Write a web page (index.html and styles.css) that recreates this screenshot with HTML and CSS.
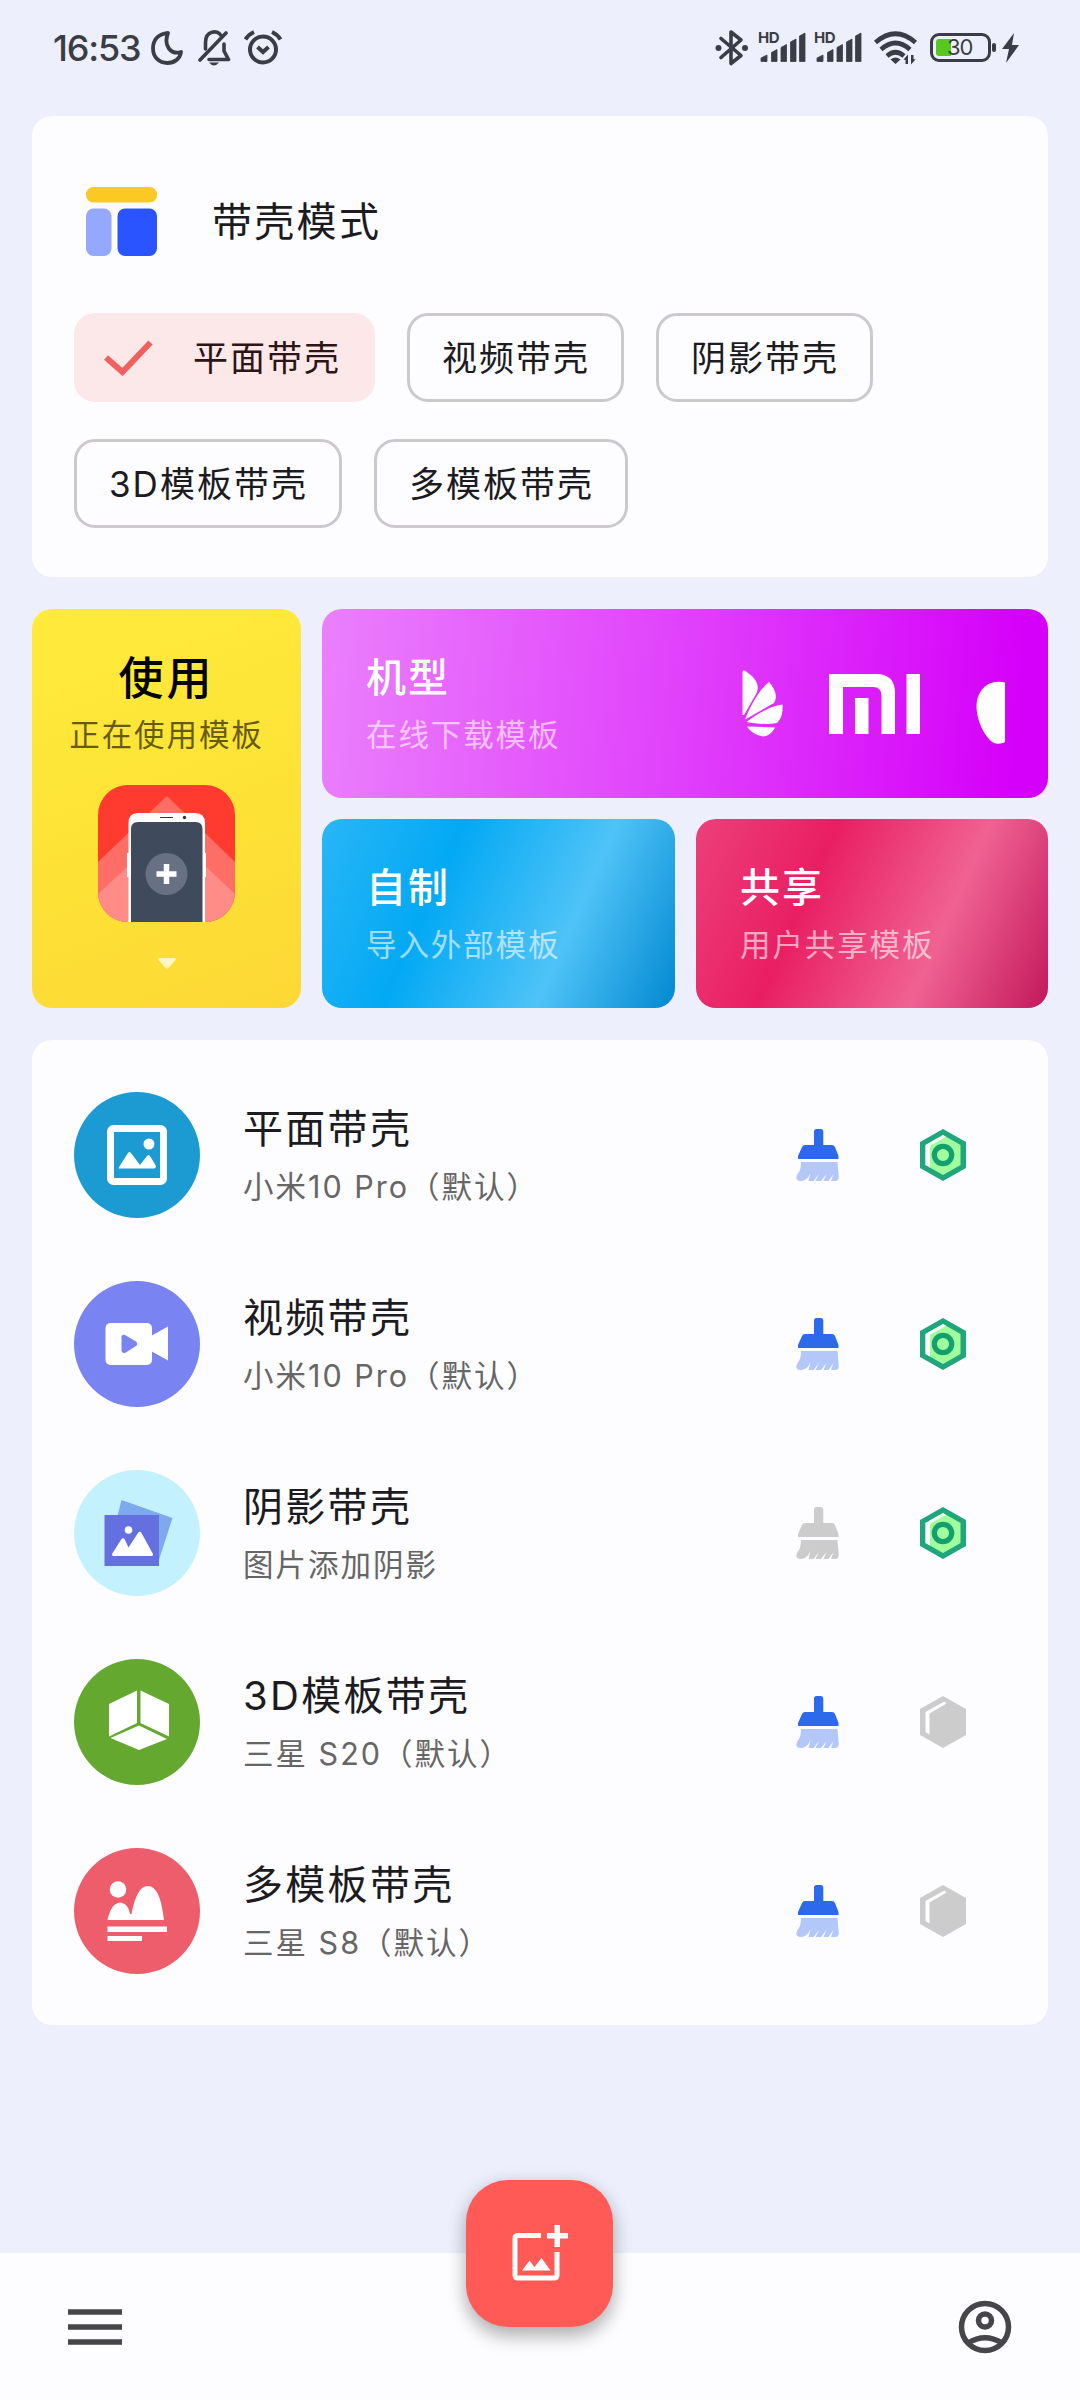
FILE: index.html
```html
<!DOCTYPE html>
<html lang="zh-CN">
<head>
<meta charset="utf-8">
<title>带壳模式</title>
<link rel="stylesheet" href="styles.css">
</head>
<body>
<svg class="defs" width="0" height="0" aria-hidden="true">
  <symbol id="broom" viewBox="0 0 43 52">
    <path class="handle" d="M18 16V2.500Q18 0 20.500 0H25Q27.300 0 27.300 2.500V16H36Q38 16 39 18L42.500 27V30H2V27L6 18Q7 16 9 16Z"/>
    <path class="bristle" d="M5 33H41.500L42.800 48Q42.800 52 39 52H35L37.500 45 32.500 52H27.500L30.500 45 25 52H19.500L23 45 17.500 52H12.500L14.500 44Q11 52 5 52 0 52 .3 48 1 45 3 43 5 40 5 33Z"/>
  </symbol>
  <symbol id="hex-on" viewBox="0 0 46 52">
    <path fill="#1fa67c" d="M23 0 46 13V39L23 52 0 39V13Z"/>
    <path fill="#a0ff9c" d="M23 6 40.500 16V36L23 46 5.500 36V16Z"/>
    <path fill="#fff" d="M23 6 26 7.700 10 16.800V38.500L5.500 36V16Z"/>
    <circle cx="23" cy="26" r="8.700" fill="#a0ff9c" stroke="#14a06e" stroke-width="5.200"/>
  </symbol>
  <symbol id="hex-off" viewBox="0 0 46 52">
    <path fill="#ccc" d="M23 0 46 13V39L23 52 0 39V13Z"/>
    <path fill="#fff" d="M24.500 5.500 26.500 7.500 9.500 17.500V38.500L5.500 36V16Z"/>
  </symbol>
  <symbol id="signal" viewBox="0 0 46 32">
    <path d="M1 26 7 23V29.500H1ZM11.500 20.500 17 17.500V29.500H11.500ZM21 15.500 26.500 12.500V29.500H21ZM30.500 10 36 7V29.500H30.500ZM39.500 4 45 1V29.500H39.500Z" stroke="currentColor" stroke-width=".8" stroke-linejoin="round" fill="currentColor"/>
  </symbol>
</svg>

<header class="status">
  <span class="clock">16:53</span>
  <svg class="moon" width="32" height="34" viewBox="0 0 32 34"><path d="M17 2C6 3 2 10 2 17.500 2 26 8 32 16.500 32 23 32 29 28 30 21 20 24 12 15 17 2Z" fill="none" stroke="currentColor" stroke-width="3.800" stroke-linejoin="round"/></svg>
  <svg class="bell" width="34" height="36" viewBox="0 0 34 36"><g fill="none" stroke="currentColor" stroke-width="3.600" stroke-linecap="round" stroke-linejoin="round"><path d="M2 30 28 3"/><path d="M7.500 19V12.500C7.500 0 20 0 22.500 5M26 14V21L30.500 29.500H11"/></g><path d="M11 32.500H21Q16 38.500 11 32.500Z" fill="currentColor"/></svg>
  <svg class="alarm" width="38" height="36" viewBox="0 0 38 36"><g fill="none" stroke="currentColor" stroke-width="4"><circle cx="19" cy="19.500" r="13"/><path d="M13.500 17 19 22 24.500 17M1.500 9.500Q4.500 4.500 10 2M36.500 9.500Q33.500 4.500 28 2"/></g></svg>
  <span class="spacer"></span>
  <svg class="bt" width="34" height="38" viewBox="0 0 34 38"><path d="M6 9.500 26 26.500 16 34.500V3L26 11 6 28.500" fill="none" stroke="currentColor" stroke-width="3.600" stroke-linejoin="round" stroke-linecap="round"/><circle cx="3.500" cy="19" r="3"/><circle cx="30" cy="19" r="3"/></svg>
  <span class="net"><svg width="46" height="32"><use href="#signal"/></svg><b>HD</b></span>
  <span class="net"><svg width="46" height="32"><use href="#signal"/></svg><b>HD</b></span>
  <svg class="wifi" width="44" height="34" viewBox="0 0 44 34"><g fill="none" stroke="currentColor" stroke-width="4.600"><path d="M1.500 11.500Q21.500-6 41.500 11.500M7 18.500Q21.500 5.500 36 18.500M13 25Q21.500 17.500 30 25"/></g><path d="M16.500 28.500Q21.500 24.500 26.500 28.500L21.500 33Z"/><path d="M29.500 28.500 34 23.500V33H31.500V29ZM41.500 28.500 37 33.500V24H39.500V28Z"/></svg>
  <span class="battery"><i></i><em>30</em></span>
  <svg class="bolt" width="17" height="30" viewBox="0 0 17 30"><path d="M12 0 0 16H7L4 30 17 12H10Z"/></svg>
</header>

<main>
  <section class="card modes">
    <h1><svg width="71" height="69" viewBox="0 0 71 69"><rect width="71" height="15.500" rx="7.500" fill="#fbc924"/><rect y="21.500" width="25.500" height="47.500" rx="7.500" fill="#94a9fd"/><rect x="31.500" y="21.500" width="39.500" height="47.500" rx="7.500" fill="#2954ff"/></svg>带壳模式</h1>
    <div class="chips">
      <button class="chip on"><svg width="49" height="36" viewBox="0 0 49 36"><path d="M2 17.500 18.500 32 46.500 2.500" fill="none" stroke="#f0605f" stroke-width="6"/></svg>平面带壳</button>
      <button class="chip">视频带壳</button>
      <button class="chip">阴影带壳</button>
      <button class="chip">3D模板带壳</button>
      <button class="chip">多模板带壳</button>
    </div>
  </section>

  <section class="tiles">
    <div class="tile use">
      <h2>使用</h2><p>正在使用模板</p>
      <svg class="app" width="137" height="137" viewBox="0 0 137 137"><defs><clipPath id="r"><rect width="137" height="137" rx="30"/></clipPath></defs><g clip-path="url(#r)"><rect width="137" height="137" fill="#ff3b30"/><path d="M69 11 137 77V137H0V77Z" fill="#ff6e66"/><path d="M69 45 137 109V137H0V109Z" fill="#ff8c86"/><path d="M29 68H108V92H29Z" fill="#fff"/><path d="M30.500 137V38Q30.500 28 40 28H97Q107 28 107 38V137Z" fill="#fff"/><path d="M33 137V44Q33 37 40 37H97.500Q104.500 37 104.500 44V137Z" fill="#3f4b5c"/><path d="M62 32.500H75" stroke="#333" stroke-width="1.200"/><circle cx="86.500" cy="32.500" r="1.700" fill="#333"/><circle cx="68.500" cy="89" r="21" fill="#677183"/><path d="M68.500 79V99M58.500 89H78.500" stroke="#fff" stroke-width="5.500"/></g></svg>
      <svg class="arrow" width="20" height="13" viewBox="0 0 20 13"><path d="M2.500 1H17.500Q19.500 1 18.500 3L12 10.500Q10 12.500 8 10.500L1.500 3Q.5 1 2.500 1Z" fill="#fff8c4"/></svg>
    </div>
    <div class="tile phone">
      <div><h3>机型</h3><p>在线下载模板</p></div>
      <svg width="264" height="76" viewBox="0 0 264 76" fill="#fff"><path d="M.5 46V3C1 .5 3.500 1 6 4 15 10 18 18 14 25L2 46ZM3 50.500C8 38 16 22 27 13 33 20 36 27 32 34ZM4.500 53C15 45 28 37 40.500 35.500 41 45 39 50 35 54 25 56 15 54.500 4.500 53ZM5 57.500 33 58.500C30 64 26 67 21 67.500 13 66 8 62 5 57.500Z"/><path d="M87 5H134Q153 5 153 24V65H139.500V27Q139.500 18 131 18H101V65H87ZM113 29H126.500V65H113ZM164.500 5H178V65H164.500Z"/><path d="M263 13.500C245 9 234.500 23 234.500 37 234.500 53 244 70 252 74 256 75.500 260 74.500 263 73Z"/></svg>
    </div>
    <div class="tile self"><h3>自制</h3><p>导入外部模板</p></div>
    <div class="tile share"><h3>共享</h3><p>用户共享模板</p></div>
  </section>

  <ul class="card list">
    <li><span class="disc flat"><svg width="126" height="126" viewBox="0 0 126 126" fill="#fff"><rect x="36.500" y="36.500" width="53" height="53" rx="3" fill="none" stroke="#fff" stroke-width="7"/><circle cx="75" cy="52" r="5.500"/><path d="M45 75 54 61Q55.500 59 57 61L66 73 73 64Q74.500 62 76 64L82 74Q82 76 80 76.500H46Q44 76.500 45 75Z"/></svg></span>
      <div class="label"><h3>平面带壳</h3><p>小米10 Pro（默认）</p></div><svg class="broom"><use href="#broom"/></svg><svg class="hex"><use href="#hex-on"/></svg></li>
    <li><span class="disc video"><svg width="126" height="126" viewBox="0 0 126 126" fill="#fff"><rect x="31.500" y="42" width="46.500" height="42" rx="5"/><path d="M77 55 94 45.500V79.500L77 70Z"/><path d="M47.500 55.500Q48 53 51 54L62 60.500Q64.500 63 62 65L51 72Q48 72.500 47.500 70Z" fill="#7983f2"/></svg></span>
      <div class="label"><h3>视频带壳</h3><p>小米10 Pro（默认）</p></div><svg class="broom"><use href="#broom"/></svg><svg class="hex"><use href="#hex-on"/></svg></li>
    <li><span class="disc shadow"><svg width="126" height="126" viewBox="0 0 126 126" fill="#fff"><path d="M47.500 30 98.500 48 83 96 35 80Z" fill="#7fa9ee"/><rect x="30.500" y="45" width="54.500" height="51" fill="#6470e0"/><circle cx="54.500" cy="60" r="3.800"/><path d="M38 84 47.500 69Q49 67.500 50.500 69L54.500 77.500 64 63Q66 60.500 67.500 63L79 84Q79 86 78 86H39Q38 86 38 84Z"/></svg></span>
      <div class="label"><h3>阴影带壳</h3><p>图片添加阴影</p></div><svg class="broom off"><use href="#broom"/></svg><svg class="hex"><use href="#hex-on"/></svg></li>
    <li><span class="disc cube"><svg width="126" height="126" viewBox="0 0 126 126" fill="#fff"><path d="M63 31.500V64L35 77.500V45ZM66.500 31.500 95 45V77.500L66.500 64ZM65 66.500 93 80 65 91 36.500 79Z"/></svg></span>
      <div class="label"><h3>3D模板带壳</h3><p>三星 S20（默认）</p></div><svg class="broom"><use href="#broom"/></svg><svg class="hex"><use href="#hex-off"/></svg></li>
    <li><span class="disc multi"><svg width="126" height="126" viewBox="0 0 126 126" fill="#fff"><circle cx="44" cy="41.500" r="8.300"/><path d="M33.500 72C36 61 40 55 46 54.500 52 55 55 60 56 66H57.500C61 48 66 38 74 38 84 38 88 55 90 72ZM33.500 78.500H93V84H33.500ZM33.500 88H68V93H33.500Z"/></svg></span>
      <div class="label"><h3>多模板带壳</h3><p>三星 S8（默认）</p></div><svg class="broom"><use href="#broom"/></svg><svg class="hex"><use href="#hex-off"/></svg></li>
  </ul>
</main>

<nav class="bar">
  <svg width="54" height="36" viewBox="0 0 54 36"><path d="M0 3H54M0 18H54M0 33H54" stroke="currentColor" stroke-width="5.500"/></svg>
  <button class="fab" aria-label="add"><svg width="56" height="58" viewBox="0 0 56 58" fill="#fff"><path d="M29 10.500H6Q3 10.500 3 13.500V50Q3 53 6 53H42Q45 53 45 50V27" fill="none" stroke="#fff" stroke-width="5"/><path d="M10 45.500 17.500 35.500 22.500 42 29.500 33 38.500 45.500ZM42.500 0H48V8H56V13.500H48V22H42.500V13.500H35V8H42.500Z"/></svg></button>
  <svg width="54" height="54" viewBox="0 0 54 54"><g fill="none" stroke="currentColor" stroke-width="5.500"><circle cx="27" cy="27" r="23.500"/><circle cx="27" cy="20.500" r="6.500"/><path d="M10 43Q27 32.500 44 43"/></g></svg>
</nav>
</body>
</html>
```
FILE: styles.css
```css
* { box-sizing: border-box; }
body {
  margin: 0;
  width: 1080px;
  height: 2400px;
  display: flex;
  flex-direction: column;
  background: #edf0fc;
  color: #1c1b1f;
  font-family: Inter, "Noto Sans CJK SC", sans-serif;
  overflow: hidden;
}
h1, h2, h3, p, ul { margin: 0; padding: 0; font-weight: 400; }
button { font: inherit; color: inherit; border: 0; }
svg { display: block; flex: none; }
.defs { position: absolute; }

.status { height: 116px; padding: 0 61px 21px 53px; display: flex; align-items: center; color: #3b3d46; }
.status svg { fill: currentColor; }
.clock { font: 500 36px/40px Inter, sans-serif; letter-spacing: -1.2px; width: 97px; white-space: nowrap; }
.moon { margin-left: 1px; }
.bell { margin-left: 15px; }
.alarm { margin-left: 12px; }
.spacer { flex: 1; }
.bt { margin-right: 11px; }
.net { position: relative; width: 46px; margin-right: 10px; }
.net b { position: absolute; left: -2px; top: -2px; font: 700 15px/16px Inter, sans-serif; letter-spacing: -.5px; }
.wifi { margin: 0 12px 0 2px; }
.battery { position: relative; width: 61px; height: 29px; border: 3px solid #3b3d46; border-radius: 9px; }
.battery::after { content: ""; position: absolute; right: -8px; top: 7px; width: 4px; height: 9px; border-radius: 2px; background: #3b3d46; }
.battery i { position: absolute; left: 3px; top: 3px; width: 15px; height: 17px; border-radius: 3px 0 0 3px; background: #59c81e; }
.battery em { position: absolute; left: 14px; top: 0; font: 400 22px/23px Inter, sans-serif; letter-spacing: -1px; }
.bolt { margin-left: 11px; }

main { flex: 1; padding: 0 32px; }
.card { background: #fdfcff; border-radius: 20px; }

.modes { height: 461px; padding: 71px 42px 0; }
.modes h1 { display: flex; align-items: center; gap: 55px; height: 69px; padding-left: 12px; font-size: 40px; line-height: 56px; letter-spacing: 2.3px; }
.chips { display: flex; flex-wrap: wrap; gap: 37px 32px; margin-top: 57px; }
.chip { height: 89px; padding: 0 31px 0 32px; display: flex; align-items: center; border: 3px solid #cbc9ce; border-radius: 21px; background: none; font-size: 35px; line-height: 50px; letter-spacing: 2px; }
.chip.on { background: #fde8e9; border-color: #fde8e9; padding-left: 27px; gap: 40px; color: #2c1417; }

.tiles { display: grid; grid-template: 189px 189px / 269px 353px 352px; gap: 21px; margin: 32px 0; }
.tile { border-radius: 20px; padding: 39px 0 0 44px; color: #fff; font-family: "Noto Sans CJK SC", sans-serif; }
.tile h3 { font-size: 40px; line-height: 54px; font-weight: 500; letter-spacing: 2px; }
.tile p { font-size: 30.5px; line-height: 44px; letter-spacing: 1.9px; margin-top: 9px; opacity: .6; }
.use { grid-row: 1 / 3; padding: 34px 0 0; display: flex; flex-direction: column; align-items: center; color: #000; background: linear-gradient(160deg, #ffeb3b, #fde335 50%, #fdd835); }
.use h2 { font-size: 45px; line-height: 66px; font-weight: 500; letter-spacing: 3px; }
.use p { margin-top: 2px; }
.app { margin-top: 30px; }
.arrow { margin-top: 35px; }
.phone { grid-column: 2 / 4; display: flex; justify-content: space-between; padding-right: 42px; background: linear-gradient(95deg, #ea80fc, #e040fb 50%, #d500f9 95%); }
.phone svg { margin-top: 21px; }
.self { background: linear-gradient(114deg, #29b6f6, #03a9f4 33%, #4fc3f7 68%, #0288d1); }
.share { background: linear-gradient(114deg, #ec407a, #e91e63 33%, #f06292 68%, #c2185b); }

.list { list-style: none; height: 985px; padding: 20px 42px; }
.list li { height: 189px; display: flex; align-items: center; }
.disc { width: 126px; height: 126px; border-radius: 50%; }
.flat { background: #1c9bd3; }
.video { background: #7983f2; }
.shadow { background: #c4f1fe; }
.cube { background: #65a830; }
.multi { background: #ed5d6b; }
.label { flex: 1; margin-left: 43px; }
.label h3 { font-size: 40px; line-height: 56px; letter-spacing: 2.3px; }
.label p { font-size: 30.5px; line-height: 44px; letter-spacing: 2px; margin-top: 8px; color: #666; }
.broom { width: 43px; height: 52px; --h: #2c69eb; --b: #b3c7f9; }
.broom.off { --h: #ccc; --b: #ccc; }
.handle { fill: var(--h); }
.bristle { fill: var(--b); }
.hex { width: 46px; height: 52px; margin: 0 40px 0 81px; }

.bar { position: relative; height: 147px; padding: 0 68px; display: flex; justify-content: space-between; align-items: center; background: #fdfcff; color: #45454a; }
.fab { position: absolute; left: 466px; top: -73px; width: 147px; height: 147px; padding: 0; border-radius: 42px; background: #ff5a55; display: flex; align-items: center; justify-content: center; box-shadow: 0 10px 18px rgba(0,0,0,.25), 0 2px 20px rgba(0,0,0,.1); }
```
